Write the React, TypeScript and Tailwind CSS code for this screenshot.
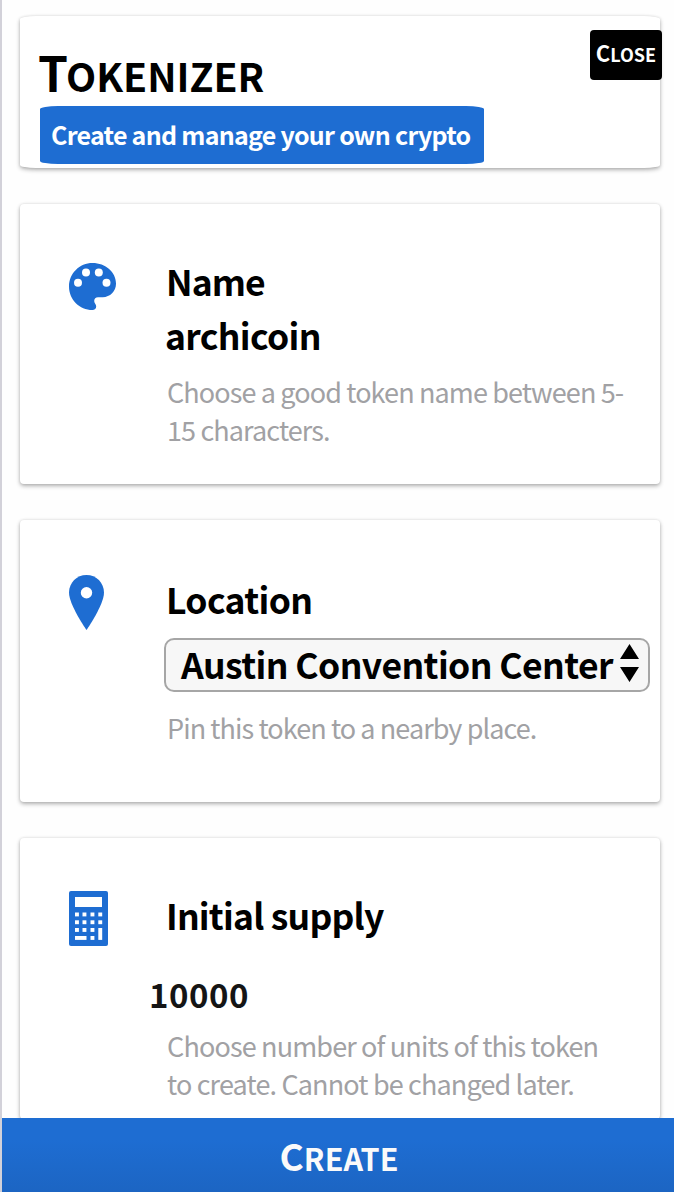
import React from "react";

const PaletteIcon = () => (
  <svg width="47" height="47" viewBox="0 0 47 47" className="block">
    <path
      d="M23.5 0C36.5 0 47 9 47 20.8C47 28.3 41 34.2 33.8 34.2H29C26.7 34.2 25.2 35.8 25.2 38C25.2 40.2 27.2 41 27.2 43.5C27.2 45.6 25.6 47 23.5 47C10.5 47 0 36.5 0 23.5S10.5 0 23.5 0Z"
      fill="#1e6dd2"
    />
    <circle cx="9" cy="19.8" r="4" fill="#fff" />
    <circle cx="17" cy="9.4" r="4" fill="#fff" />
    <circle cx="29.8" cy="9.4" r="4" fill="#fff" />
    <circle cx="37.5" cy="19.8" r="4" fill="#fff" />
  </svg>
);

const PinIcon = () => (
  <svg width="35" height="55" viewBox="0 0 35 55" className="block">
    <path
      d="M17.5 0C27.2 0 35 7.8 35 17.5C35 30 17.5 55 17.5 55S0 30 0 17.5C0 7.8 7.8 0 17.5 0Z"
      fill="#1e6dd2"
    />
    <circle cx="17.5" cy="17.8" r="5.7" fill="#fff" />
  </svg>
);

const CalculatorIcon = () => (
  <svg width="39" height="55" viewBox="0 0 39 55" className="block">
    <rect width="39" height="55" rx="2" fill="#1e6dd2" />
    <g fill="#fff">
      <rect x="6" y="6" width="27" height="10" />
      {[21.5, 29.3, 37].map((y) =>
        [6, 13.5, 21.5, 29.3].map((x) =>
          x === 29.3 && y === 37 ? null : <rect key={`${x}-${y}`} x={x} y={y} width="3.9" height="3.9" />
        )
      )}
      <rect x="6" y="45" width="11.5" height="3.9" />
      <rect x="21.5" y="45" width="3.9" height="3.9" />
      <rect x="29.3" y="37" width="3.9" height="11.9" />
    </g>
  </svg>
);

const cardShadow = "shadow-[0_2px_4px_rgba(0,0,0,0.3),0_0_3px_rgba(0,0,0,0.1)]";

export default function App() {
  return (
    <div className="flex h-[1192px] w-[674px] flex-col overflow-hidden border-l-2 border-[#d2d1d9] bg-[#fefefe] font-['Noto_Sans_CJK_SC',sans-serif] whitespace-nowrap text-black">
      <main className="flex min-h-0 flex-1 flex-col gap-9 overflow-hidden pt-4 pl-[18px]">
        <header className={`relative h-[152px] w-[640px] shrink-0 rounded-[16px/3px] bg-white pl-5 ${cardShadow}`}>
          <h1 className="-ml-0.5 h-[90px] pt-[25px] text-[48px] leading-[60px] font-bold">
            T<span className="-ml-0.5 text-[39.2px] uppercase">okenizer</span>
          </h1>
          <p className="h-[58px] w-[444px] rounded-[18px/3px] bg-[#1e6dd2] pl-[11px] text-[25px] leading-[56px] font-bold tracking-[-0.73px] text-white">
            Create and manage your own crypto
          </p>
          <button className="absolute top-3.5 -right-0.5 h-[50px] w-[72px] rounded-[4px] bg-black pb-1 text-[22px] leading-[44px] font-bold text-white">
            C<span className="text-[18px] uppercase">lose</span>
          </button>
        </header>

        <section className={`flex h-[280px] w-[640px] shrink-0 rounded-[4px] bg-white pl-[49px] ${cardShadow}`}>
          <div className="w-[97px] shrink-0 pt-[59px]">
            <PaletteIcon />
          </div>
          <div className="pt-[50px]">
            <h2 className="text-[35.5px] leading-[54px] font-bold tracking-[-0.9px]">Name</h2>
            <div className="-ml-px text-[35.5px] leading-[54px] font-bold tracking-[-0.65px]">archicoin</div>
            <p className="pt-[11px] pl-px text-[27px] leading-[38px] tracking-[-0.88px] text-[#a1a1a4]">
              Choose a good token name between 5-
              <br />
              15 characters.
            </p>
          </div>
        </section>

        <section className={`flex h-[282px] w-[640px] shrink-0 rounded-[4px] bg-white pl-[49px] ${cardShadow}`}>
          <div className="w-[95px] shrink-0 pt-[55px]">
            <PinIcon />
          </div>
          <div className="pt-[52px]">
            <h2 className="pl-0.5 text-[35.5px] leading-[54px] font-bold tracking-[-0.65px]">Location</h2>
            <div className="mt-3 flex h-[54px] w-[486px] items-center justify-between rounded-[10px] border-2 border-[#a6a6a6] bg-[#f7f7f7] pr-[9px] pl-[15px]">
              <span className="mb-[3px] text-[35.5px] leading-[50px] font-bold tracking-[-0.6px]">Austin Convention Center</span>
              <svg width="19" height="38" viewBox="0 0 19 38" className="mb-1 shrink-0">
                <path d="M9.5 0L19 15H0ZM0 23H19L9.5 38Z" />
              </svg>
            </div>
            <p className="pt-[17px] pl-[3px] text-[27px] leading-[38px] tracking-[-0.92px] text-[#a1a1a4]">
              Pin this token to a nearby place.
            </p>
          </div>
        </section>

        <section className={`flex h-[281px] w-[640px] shrink-0 rounded-[4px] bg-white pl-[49px] ${cardShadow}`}>
          <div className="w-20 shrink-0 pt-[53px]">
            <CalculatorIcon />
          </div>
          <div className="pt-[50px]">
            <h2 className="pl-[17px] text-[35.5px] leading-[54px] font-bold tracking-[-0.8px]">Initial supply</h2>
            <div className="mt-[25px] text-[33px] leading-[54px] font-bold tracking-[0.5px] text-[#151515]">10000</div>
            <p className="pt-[6px] pl-[18px] text-[27px] leading-[38px] tracking-[-0.85px] text-[#a1a1a4]">
              Choose number of units of this token
              <br />
              to create. Cannot be changed later.
            </p>
          </div>
        </section>
      </main>

      <button className="h-[74px] shrink-0 bg-linear-to-b from-[#1e6dd2] from-30% to-[#1c65c3] pt-0.5 pl-0.5 text-[37px] leading-[68px] font-bold text-[#fafafa]">
        C<span className="text-[30.5px] uppercase">reate</span>
      </button>
    </div>
  );
}
